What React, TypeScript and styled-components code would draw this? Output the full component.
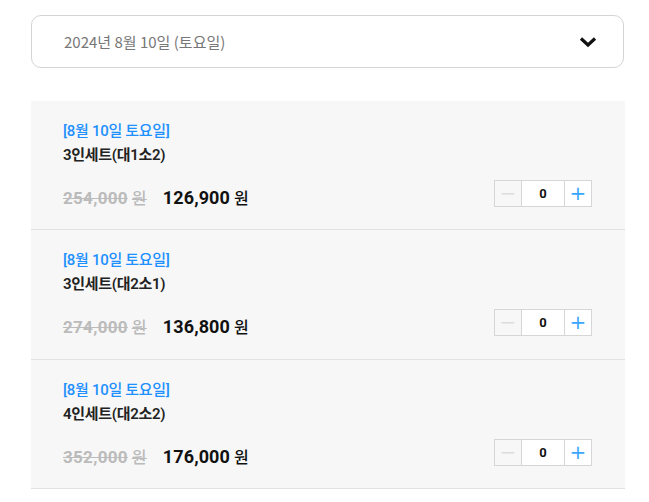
import React from "react";
import styled, { createGlobalStyle } from "styled-components";

const Global = createGlobalStyle`
  html, body { margin: 0; padding: 0; background: #fff; }
  body { font-family: Roboto, "Noto Sans CJK KR", sans-serif; }
`;

const Page = styled.div`
  padding: 15px 24px 0 31px;
`;

const Select = styled.div`
  height: 53px;
  box-sizing: border-box;
  margin-right: 1px;
  border: 1px solid #d4d4d4;
  border-radius: 10px;
  display: flex;
  align-items: center;
  justify-content: space-between;
  padding: 0 26px 0 32px;
  font-family: "Noto Sans CJK KR", sans-serif;
  font-size: 15px;
  color: #777;
`;

const List = styled.div`
  margin-top: 33px;
  background: #f7f7f7;
`;

const Item = styled.div`
  border-bottom: 1px solid #e2e2e2;
  padding: 19px 33px 0 32px;
  box-sizing: border-box;
  height: 129px;
  display: flex;
  flex-direction: column;
  &:nth-child(2) {
    height: 130px;
  }
`;

const DateLabel = styled.div`
  color: #1e90ff;
  font-size: 15px;
  font-weight: 500;
  line-height: 22px;
  letter-spacing: -0.3px;
`;

const Title = styled.div`
  color: #222;
  font-size: 15px;
  font-weight: 600;
  line-height: 22px;
  margin-top: 2px;
  letter-spacing: -0.3px;
`;

const Bottom = styled.div`
  display: flex;
  align-items: flex-start;
  justify-content: space-between;
  margin-top: 8px;
`;

const Prices = styled.div`
  display: flex;
  align-items: baseline;
  gap: 16px;
  height: 20px;
  line-height: 20px;
  margin-top: 14px;
`;

const OldPrice = styled.span`
  color: #bbb;
  font-size: 17px;
  font-weight: 700;
  letter-spacing: 0.3px;
  text-decoration: line-through;
`;

const NewPrice = styled.span`
  color: #111;
  font-size: 18px;
  font-weight: 700;
  letter-spacing: 0.1px;
`;

const Won = styled.span`
  font-weight: 500;
  margin-left: 4px;
  font-size: 16px;
`;

const Stepper = styled.div`
  display: flex;
  width: 98px;
  height: 27px;
  margin-top: 6px;
  border: 1px solid #d6d6d6;
  box-sizing: border-box;
`;

const StepBtn = styled.button<{ $disabled?: boolean }>`
  width: 26px;
  height: 25px;
  padding: 0;
  border: 0;
  background: ${(p) => (p.$disabled ? "#f7f7f7" : "#fff")};
  color: ${(p) => (p.$disabled ? "#ddd" : "#3aa6ff")};
  font-size: 20px;
  font-family: "DejaVu Sans", sans-serif;
  line-height: 25px;
  display: flex;
  align-items: center;
  justify-content: center;
`;

const Qty = styled.div`
  flex: 1;
  border-left: 1px solid #d6d6d6;
  border-right: 1px solid #d6d6d6;
  background: #fff;
  display: flex;
  align-items: center;
  justify-content: center;
  font-size: 13px;
  font-weight: 700;
  color: #111;
`;

const items = [
  { title: "3인세트(대1소2)", old: "254,000", price: "126,900" },
  { title: "3인세트(대2소1)", old: "274,000", price: "136,800" },
  { title: "4인세트(대2소2)", old: "352,000", price: "176,000" },
];

export default function App() {
  return (
    <Page>
      <Global />
      <Select>
        <span>2024년 8월 10일 (토요일)</span>
        <svg width="18" height="12" viewBox="0 0 18 12">
          <polyline points="2,2.5 9,9 16,2.5" fill="none" stroke="#111" strokeWidth="3.2" />
        </svg>
      </Select>
      <List>
        {items.map((it) => (
          <Item key={it.title}>
            <DateLabel>[8월 10일 토요일]</DateLabel>
            <Title>{it.title}</Title>
            <Bottom>
              <Prices>
                <OldPrice>
                  {it.old}
                  <Won>원</Won>
                </OldPrice>
                <NewPrice>
                  {it.price}
                  <Won>원</Won>
                </NewPrice>
              </Prices>
              <Stepper>
                <StepBtn $disabled>−</StepBtn>
                <Qty>0</Qty>
                <StepBtn>+</StepBtn>
              </Stepper>
            </Bottom>
          </Item>
        ))}
      </List>
    </Page>
  );
}
